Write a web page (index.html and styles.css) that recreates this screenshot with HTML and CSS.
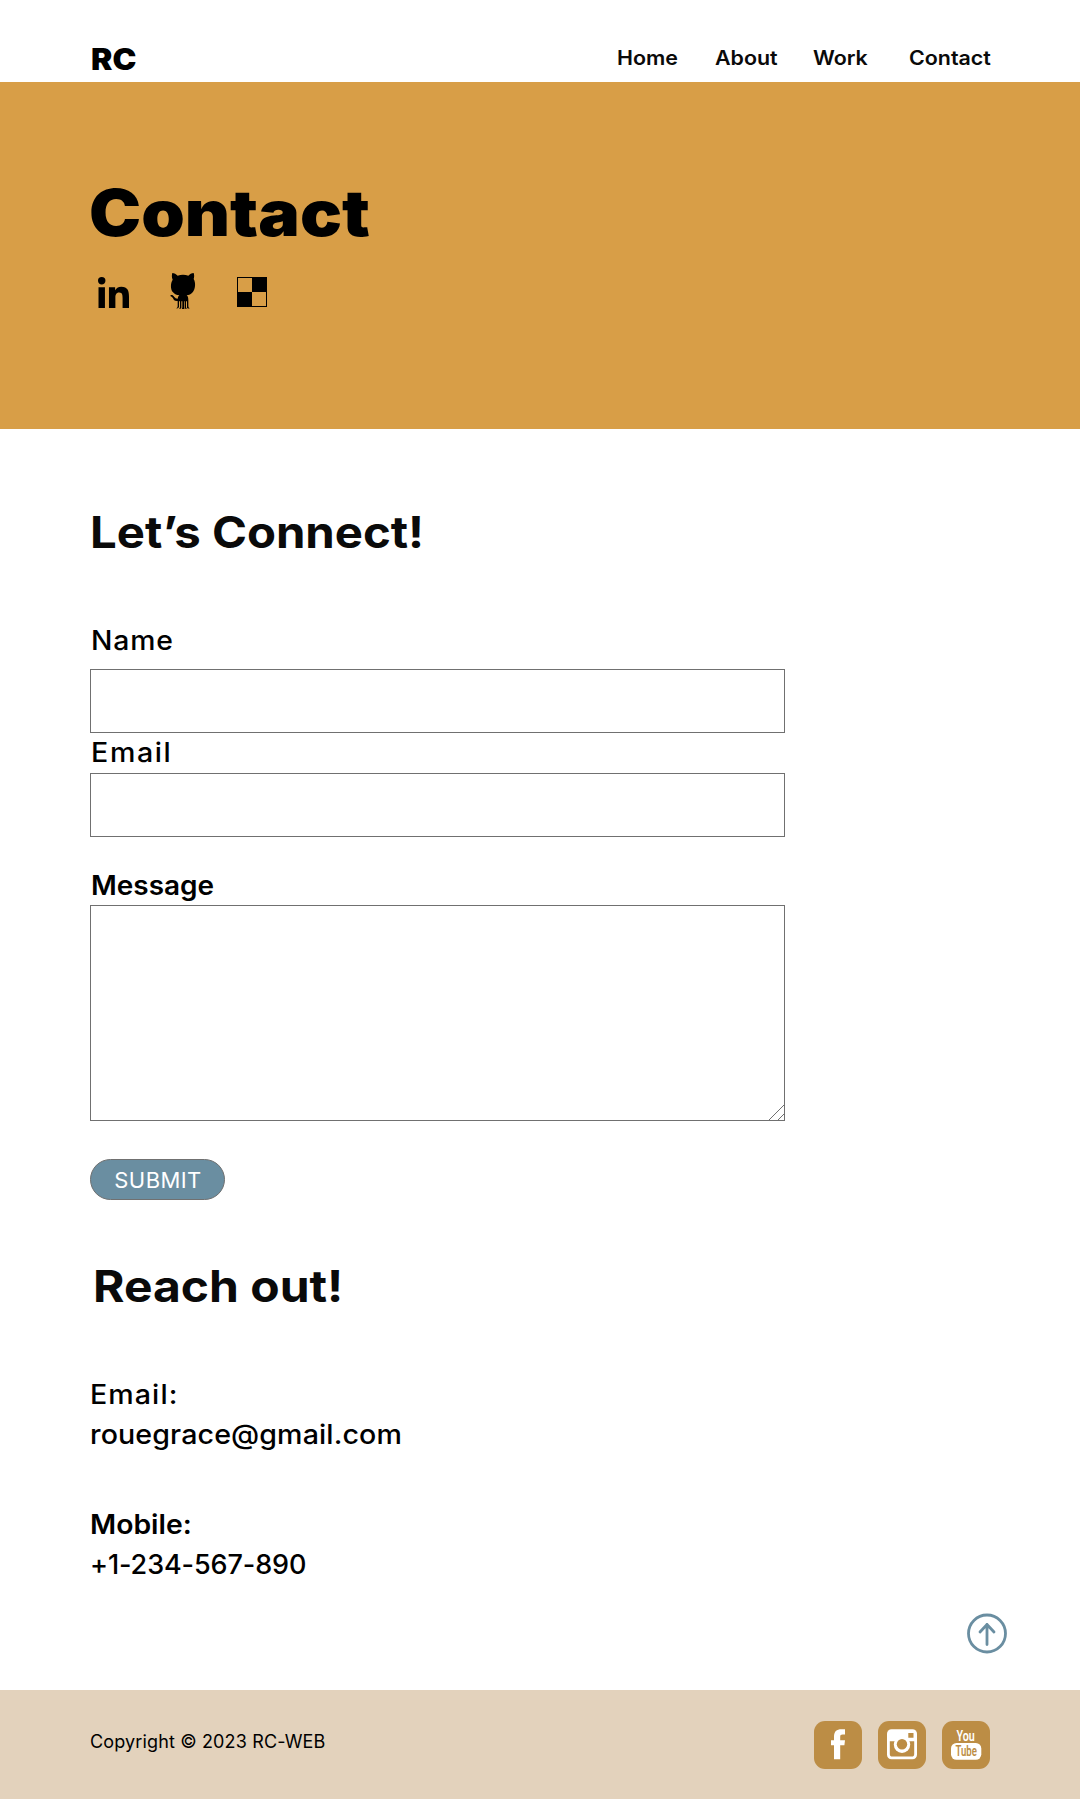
FILE: index.html
```html
<!DOCTYPE html>
<html lang="en">
<head>
<meta charset="utf-8">
<title>Contact | RC-WEB</title>
<link rel="stylesheet" href="styles.css">
</head>
<body>
<header class="site-header">
  <a class="logo" href="#">RC</a>
  <nav class="nav">
    <a href="#">Home</a>
    <a href="#">About</a>
    <a href="#">Work</a>
    <a href="#">Contact</a>
  </nav>
</header>

<section class="hero">
  <h1>Contact</h1>
  <div class="profiles">
    <a href="#" aria-label="LinkedIn"><svg width="31" height="31" viewBox="0 0 448 448"><path d="M100.3 448H7.4V148.9h92.9zM53.8 108.1C24.1 108.1 0 83.5 0 53.8a53.8 53.8 0 0 1 107.6 0c0 29.7-24.1 54.3-53.8 54.3zM447.9 448h-92.7V302.4c0-34.7-.7-79.2-48.3-79.2-48.3 0-55.7 37.7-55.7 76.7V448h-92.8V148.9h89.1v40.8h1.3c12.4-23.5 42.7-48.3 87.9-48.3 94 0 111.3 61.9 111.3 142.3V448z"/></svg></a>
    <a href="#" aria-label="GitHub"><svg width="36" height="44" viewBox="0 0 108 132"><path d="M22 15C27 15 34 19 38 23C47 19 61 19 70 23C74 19 80 15 86 15C88 20 88 28 86 33C93 44 91 64 83 73C78 79 72 81 65 82C70 86 70 92 70 98V115Q70 119 74 121Q69 123 66 119V100H63V117Q63 121 66 123Q61 124 59 120V100H57V117Q57 121 59 123H50Q52 121 52 117V100H49V119Q47 124 42 123Q45 121 45 117V100H42V117Q40 122 34 121Q38 119 38 115V99C29 100 26 96 24 91Q22 86 16 84Q16 80 21 81C27 82 28 92 38 92Q39 85 43 82C35 81 29 79 24 73C16 64 16 45 23 35C20 29 20 21 22 15Z"/></svg></a>
    <a href="#" aria-label="Delicious"><svg width="30" height="30" viewBox="0 0 30 30"><path d="M15 0h15v15H15zM0 15h15v15H0z"/><rect x=".5" y=".5" width="29" height="29" fill="none" stroke="#000"/></svg></a>
  </div>
</section>

<main class="content">
  <h2 class="connect-title">Let’s Connect!</h2>
  <form class="form">
    <label class="label-name" for="name">Name</label>
    <input id="name" type="text">
    <label class="label-email" for="email">Email</label>
    <input id="email" type="text">
    <label class="label-message" for="message">Message</label>
    <div class="message-box">
      <textarea id="message"></textarea>
      <svg class="grip" width="17" height="17" viewBox="0 0 17 17"><path d="M0 17L17 0M9 17L17 9"/></svg>
    </div>
    <button type="button">SUBMIT</button>
  </form>

  <h2 class="reach-title">Reach out!</h2>
  <div class="details">
    <p class="detail-email">Email:</p>
    <p class="detail-address">rouegrace@gmail.com</p>
    <p class="detail-mobile">Mobile:</p>
    <p class="detail-phone">+1-234-567-890</p>
  </div>
  <a class="to-top" href="#" aria-label="Back to top"><svg width="40" height="41" viewBox="0 0 40 41"><circle cx="20" cy="20.5" r="18.5"/><path d="M20 31.5V11.5M13 19l7-7.5 7 7.5"/></svg></a>
</main>

<footer class="site-footer">
  <p class="copyright">Copyright © 2023 RC-WEB</p>
  <div class="social">
    <a href="#" aria-label="Facebook"><svg width="48" height="48" viewBox="0 0 48 48"><rect class="tile" width="48" height="48" rx="11"/><path class="mark" d="M20 38.3V24.3H17V19.3H20V16C20 10.5 22.5 8.3 27.5 8.3H31V13.5H28.7C26.8 13.5 26.2 14.2 26.2 16V19.3H31L30.4 24.3H26.2V38.3Z"/></svg></a>
    <a href="#" aria-label="Instagram"><svg width="48" height="48" viewBox="0 0 48 48"><rect class="tile" width="48" height="48" rx="11"/><rect class="mark" x="9" y="8.2" width="30" height="30" rx="4.5"/><path class="tile" d="M11.8 20.3H36.2V33Q36.2 35.6 33.6 35.6H14.4Q11.8 35.6 11.8 33ZM30.3 12h5.2v4.8h-5.2z"/><circle class="mark" cx="24" cy="23.7" r="8.2"/><circle class="tile" cx="24" cy="23.3" r="5.2"/></svg></a>
    <a href="#" aria-label="YouTube"><svg width="48" height="48" viewBox="0 0 48 48"><rect class="tile" width="48" height="48" rx="11"/><text class="yt mark" x="14.6" y="19.7" textLength="18.2" lengthAdjust="spacingAndGlyphs">You</text><rect class="mark" x="9" y="22" width="30.3" height="16.8" rx="5.5"/><text class="yt tile" x="13.4" y="35.3" textLength="21.4" lengthAdjust="spacingAndGlyphs">Tube</text></svg></a>
  </div>
</footer>
</body>
</html>
```
FILE: styles.css
```css
* { box-sizing: border-box; }
body {
  margin: 0;
  background: #fff;
  color: #000;
  font-family: Inter, "Noto Sans", sans-serif;
}
a { color: inherit; text-decoration: none; }
h1, h2, p { margin: 0; }
svg { display: block; }

/* Headings and labels use slightly widened letterforms */
.logo, .nav a, h1, h2, label, .details p { transform-origin: 0 50%; }

.site-header {
  height: 82px;
  padding: 34px 88px 0 91px;
  display: flex;
  justify-content: space-between;
  line-height: 48px;
}
.logo { padding-top: 1px; font-size: 29.5px; font-weight: 900; transform: scaleX(1.085); }
.nav {
  display: grid;
  grid-template-columns: 98px 98.5px 95.5px 91.5px;
  margin-right: -8px;
  font-size: 20px;
  font-weight: 600;
  color: #0a0a0a;
}
.nav a { transform: scaleX(1.07); }

.hero {
  height: 347px;
  padding: 91px 89px 0;
  background: #d89e47;
}
h1 { font-size: 64px; font-weight: 900; line-height: 80px; transform: scaleX(1.09); }
.profiles {
  display: flex;
  align-items: center;
  height: 44px;
  margin: 15px 0 0 9px;
  gap: 36px;
}
.profiles a:first-child, .profiles a:last-child { padding-top: 4px; }

.content {
  height: 1261px;
  padding: 73px 90px 0;
}
h2 { font-size: 44px; font-weight: 700; line-height: 60px; color: #0a0a0a; }
.connect-title { transform: scaleX(1.075); }
.reach-title { margin: 56px 0 0 3px; transform: scaleX(1.09); }

.form {
  display: flex;
  flex-direction: column;
  align-items: flex-start;
  margin-top: 61px;
}
label { padding-left: 1px; font-size: 27px; line-height: 35px; font-weight: 500; }
.label-name { margin-bottom: 11px; letter-spacing: .8px; transform: scaleX(1.05); }
.label-email { margin: 2px 0 3px; letter-spacing: 1.5px; transform: scaleX(1.06); }
.label-message { margin: 31px 0 2px; font-weight: 600; transform: scaleX(1.035); }
input, .message-box { width: 695px; }
input, textarea {
  margin: 0;
  border: 1px solid #707070;
  border-radius: 0;
  background: #fff;
  font: 500 24px Inter, sans-serif;
}
input { height: 64px; padding: 0 16px; }
textarea { display: block; width: 100%; height: 216px; padding: 12px 16px; resize: none; }
.message-box { position: relative; }
.grip { position: absolute; right: 0; bottom: 0; fill: none; stroke: #707070; }
button {
  width: 135px;
  height: 41px;
  margin-top: 38px;
  padding: 0 0 0 1px;
  border: 1px solid #707070;
  border-radius: 21px;
  background: #6a8ea1;
  color: #fff;
  font: 400 22px Inter, sans-serif;
  letter-spacing: .4px;
}

.details { margin-top: 59px; font-size: 27px; line-height: 40px; font-weight: 500; }
.detail-email { letter-spacing: 1px; transform: scaleX(1.06); }
.detail-address { letter-spacing: .1px; transform: scaleX(1.06); }
.detail-mobile { margin-top: 50px; font-weight: 600; transform: scaleX(1.05); }
.detail-phone { letter-spacing: -.1px; }

.to-top { display: block; width: 40px; margin: 28px -17px 0 auto; }
.to-top svg { fill: none; stroke: #6a8ea1; stroke-width: 2.8; stroke-linecap: round; stroke-linejoin: round; }

.site-footer {
  height: 109px;
  padding: 31px 90px 30px;
  display: flex;
  justify-content: space-between;
  background: #e3d2bc;
}
.copyright { font-size: 18px; line-height: 41px; letter-spacing: .14px; }
.social { display: flex; gap: 16px; }
.tile { fill: #bc8d45; }
.mark { fill: #fff; }
.yt { font: 600 14.5px Roboto, sans-serif; }
```
